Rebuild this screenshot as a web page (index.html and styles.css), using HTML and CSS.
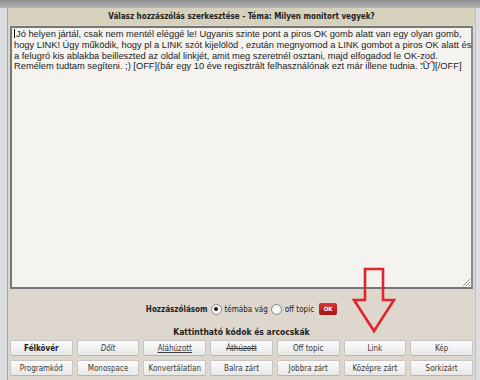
FILE: index.html
```html
<!DOCTYPE html>
<html lang="hu">
<head>
  <meta charset="UTF-8">
  <title>Válasz hozzászólás szerkesztése</title>
  <link rel="stylesheet" href="styles.css">
</head>
<body>
  <div class="topbar"></div>
  <div class="window">
    <div class="title">Válasz hozzászólás szerkesztése - Téma: Milyen monitort vegyek?</div>
    <div class="content">
      <div class="editor">
        <div class="line"><span class="caret"></span>Jó helyen jártál, csak nem mentél eléggé le! Ugyanis szinte pont a piros OK gomb alatt van egy olyan gomb,</div>
        <div class="line">hogy LINK! Úgy működik, hogy pl a LINK szót kijelölöd , ezután megnyomod a LINK gombot a piros OK alatt és</div>
        <div class="line">a felugró kis ablakba beilleszted az oldal linkjét, amit meg szeretnél osztani, majd elfogadod le OK-<span class="spell">zod</span>.</div>
        <div class="line">Remélem tudtam segíteni. ;) [OFF](bár egy 10 éve regisztrált felhasználónak ezt már illene tudnia. :U )[/OFF]</div>
        <svg class="grip" width="9" height="9" viewBox="0 0 9 9">
          <path d="M8 1 L1 8 M8 4 L4 8 M8 7 L7 8" stroke="#9a9a9a" stroke-width="1"/>
        </svg>
      </div>

      <div class="options">
        <span class="label">Hozzászólásom</span>
        <span class="radio checked"></span>
        <span class="opt">témába vág</span>
        <span class="radio"></span>
        <span class="opt">off topic</span>
        <span class="ok">OK</span>
      </div>

      <div class="codes-title">Kattintható kódok és arcocskák</div>

      <div class="codes">
        <button class="btn bold">Félkövér</button>
        <button class="btn italic">Dőlt</button>
        <button class="btn under">Aláhúzott</button>
        <button class="btn strike">Áthúzott</button>
        <button class="btn">Off topic</button>
        <button class="btn">Link</button>
        <button class="btn">Kép</button>
        <button class="btn">Programkód</button>
        <button class="btn">Monospace</button>
        <button class="btn">Konvertálatlan</button>
        <button class="btn">Balra zárt</button>
        <button class="btn">Jobbra zárt</button>
        <button class="btn">Középre zárt</button>
        <button class="btn">Sorkizárt</button>
      </div>
    </div>
  </div>

  <svg class="arrow" width="50" height="76" viewBox="0 0 50 76">
    <path d="M15 7 H33 V38 H44 L24 69 L4 38 H15 Z" fill="none" stroke="#e2252b" stroke-width="2.6" stroke-linejoin="miter"/>
  </svg>
</body>
</html>
```

FILE: styles.css
```css
body {
  margin: 0;
  width: 480px;
  height: 380px;
  overflow: hidden;
  background: #dcdde0;
  font-family: "DejaVu Sans Condensed", "Liberation Sans", sans-serif;
  position: relative;
}

.topbar {
  height: 8px;
  background: linear-gradient(#8f8f8f, #b4b4b4);
}

.window {
  margin-left: 7px;
  width: 467px;
  height: 372px;
  background: #ddd7cd;
  border-left: 1px solid #a2a2a2;
  border-right: 1px solid #c2c0bc;
}

.title {
  height: 17px;
  line-height: 17px;
  background: #d5d1bc;
  text-align: center;
  font-size: 8px;
  font-weight: bold;
  color: #222;
}

.content {
  padding: 1px 2px 0 2px;
}

.editor {
  position: relative;
  height: 257px;
  border: 2px solid #767676;
  border-right-color: #8a8a8a;
  background: #f4f3ef;
  padding: 1px 2px;
  font-family: "Liberation Sans", Arial, sans-serif;
  font-size: 9.3px;
  line-height: 10.8px;
  color: #222;
  white-space: nowrap;
}

.caret {
  display: inline-block;
  width: 0;
  height: 9px;
  border-left: 1px solid #000;
  vertical-align: -1px;
  margin-right: 1px;
}

.spell {
  text-decoration: underline wavy #d02020;
  text-decoration-thickness: 1px;
}

.grip {
  position: absolute;
  right: 0;
  bottom: 0;
}

.options {
  margin-top: 12px;
  height: 16px;
  display: flex;
  align-items: center;
  justify-content: center;
  font-size: 8px;
  color: #222;
}

.label {
  font-weight: bold;
  margin-right: 3px;
}

.radio {
  width: 9px;
  height: 9px;
  border: 1px solid #8b8b8b;
  border-radius: 50%;
  background: radial-gradient(#ffffff, #ececec);
  display: flex;
  align-items: center;
  justify-content: center;
  margin-right: 3px;
}

.radio.checked::after {
  content: "";
  width: 4px;
  height: 4px;
  border-radius: 50%;
  background: #1d1d1d;
}

.opt {
  margin-right: 3px;
}

.ok {
  margin-left: 2px;
  width: 18px;
  height: 12px;
  line-height: 12px;
  border-radius: 2px;
  background: linear-gradient(#d93434, #a51414);
  color: #fff;
  font-size: 6px;
  font-weight: bold;
  text-align: center;
}

.codes-title {
  margin-top: 9px;
  height: 12px;
  line-height: 12px;
  text-align: center;
  font-size: 8.5px;
  font-weight: bold;
  color: #222;
}

.codes {
  margin-top: 2px;
  display: grid;
  grid-template-columns: repeat(7, 1fr);
  grid-auto-rows: 16px;
  gap: 4px;
}

.btn {
  margin: 0;
  padding: 0;
  border: 1px solid #c6c6c6;
  border-bottom-color: #b4b4b4;
  border-radius: 2px;
  background: linear-gradient(#fcfcfc, #e7e7e7);
  font-family: "DejaVu Sans Condensed", "Liberation Sans", sans-serif;
  font-size: 8px;
  color: #3a3a3a;
}

.bold { font-weight: bold; color: #222; }
.italic { font-style: italic; }
.under { text-decoration: underline; }
.strike { text-decoration: line-through; }

.arrow {
  position: absolute;
  left: 350px;
  top: 262px;
}
```
